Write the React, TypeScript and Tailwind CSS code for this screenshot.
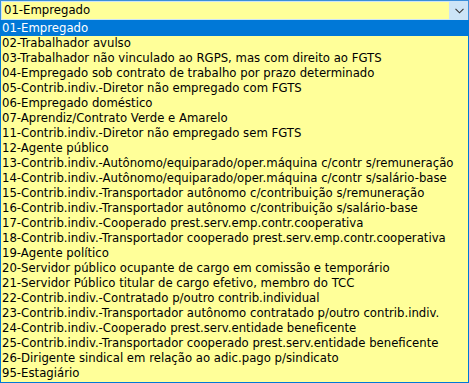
import React from "react";

const items = [
  "01-Empregado",
  "02-Trabalhador avulso",
  "03-Trabalhador não vinculado ao RGPS, mas com direito ao FGTS",
  "04-Empregado sob contrato de trabalho por prazo determinado",
  "05-Contrib.indiv.-Diretor não empregado com FGTS",
  "06-Empregado doméstico",
  "07-Aprendiz/Contrato Verde e Amarelo",
  "11-Contrib.indiv.-Diretor não empregado sem FGTS",
  "12-Agente público",
  "13-Contrib.indiv.-Autônomo/equiparado/oper.máquina c/contr s/remuneração",
  "14-Contrib.indiv.-Autônomo/equiparado/oper.máquina c/contr s/salário-base",
  "15-Contrib.indiv.-Transportador autônomo c/contribuição s/remuneração",
  "16-Contrib.indiv.-Transportador autônomo c/contribuição s/salário-base",
  "17-Contrib.indiv.-Cooperado prest.serv.emp.contr.cooperativa",
  "18-Contrib.indiv.-Transportador cooperado prest.serv.emp.contr.cooperativa",
  "19-Agente político",
  "20-Servidor público ocupante de cargo em comissão e temporário",
  "21-Servidor Público titular de cargo efetivo, membro do TCC",
  "22-Contrib.indiv.-Contratado p/outro contrib.individual",
  "23-Contrib.indiv.-Transportador autônomo contratado p/outro contrib.indiv.",
  "24-Contrib.indiv.-Cooperado prest.serv.entidade beneficente",
  "25-Contrib.indiv.-Transportador cooperado prest.serv.entidade beneficente",
  "26-Dirigente sindical em relação ao adic.pago p/sindicato",
  "95-Estagiário",
];

export default function App() {
  return (
    <div
      className="w-[469px] h-[383px] bg-white overflow-hidden text-[11.7px] text-black"
      style={{ fontFamily: '"DejaVu Sans", Verdana, sans-serif' }}
    >
      <div className="h-[20px] flex bg-[#cce4f7] border border-[#3c8fd9] border-b-0">
        <div className="flex-1 bg-[#ffff99] mx-[1px] my-[1px] flex items-center pl-[2px] leading-none">
          01-Empregado
        </div>
        <div className="w-[18px] flex items-center justify-center">
          <svg width="9" height="6" viewBox="0 0 9 6">
            <path d="M0.5 0.8 L4.5 4.8 L8.5 0.8" fill="none" stroke="#333" strokeWidth="1.1" />
          </svg>
        </div>
      </div>
      <div className="h-[363px] border border-[#0078d7] bg-[#ffff99] flex flex-col">
        {items.map((t, i) => (
          <div
            key={i}
            className={
              "h-[15px] leading-[15px] pl-[1px] whitespace-nowrap " +
              (i === 0 ? "bg-[#0078d7] text-white" : "")
            }
          >
            {t}
          </div>
        ))}
      </div>
    </div>
  );
}
